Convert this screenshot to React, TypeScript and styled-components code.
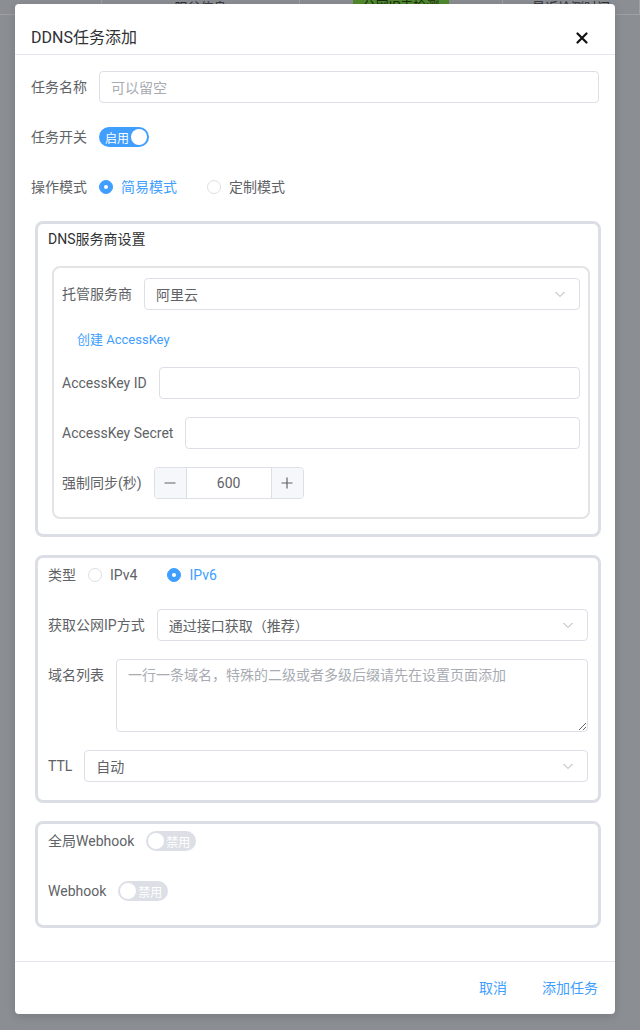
import React from "react";
import styled, { createGlobalStyle } from "styled-components";

const GlobalStyle = createGlobalStyle`
	html, body {
		margin: 0;
		padding: 0;
	}
	body {
		font-family: Roboto, "Noto Sans CJK SC", sans-serif;
		font-size: 14px;
		color: #606266;
	}
	* {
		box-sizing: border-box;
	}
`;

const Backdrop = styled.div`
	position: relative;
	width: 640px;
	height: 1030px;
	overflow: hidden;
	background: #8b8e93;
`;

const TableStrip = styled.div`
	display: flex;
	height: 15px;
	border-bottom: 1px solid #9da0a5;
	overflow: hidden;
`;

const StripCell = styled.div<{ $width: number }>`
	width: ${(p) => p.$width}px;
	flex-shrink: 0;
	border-right: 1px solid #9da0a5;
	display: flex;
	justify-content: center;
	align-items: flex-end;
	color: #2e2f31;
	font-size: 13px;
	line-height: 20px;

	& > span {
		margin-bottom: -4px;
	}
`;

const StripBadge = styled.span`
	background: #4f8a2d;
	color: #1d2b14;
	padding: 0 10px;
	margin-bottom: -2px !important;
`;

const Dialog = styled.div`
	position: absolute;
	top: 4px;
	left: 15px;
	width: 600px;
	background: #fff;
	border-radius: 4px;
	box-shadow: 0 2px 10px rgba(0, 0, 0, .15);
	display: flex;
	flex-direction: column;
`;

const Header = styled.div`
	display: flex;
	justify-content: space-between;
	align-items: center;
	padding: 24px 27px 6px 16px;
	border-bottom: 1px solid #e4e7ed;
`;

const Title = styled.div`
	font-size: 16px;
	line-height: 20px;
	color: #303133;
`;

const CloseButton = styled.div`
	display: flex;
	width: 12px;
	height: 12px;
`;

const Body = styled.div`
	padding: 16px 16px 33px;
	display: flex;
	flex-direction: column;
`;

const FormItem = styled.div<{ $top?: boolean; $gap?: number; $height?: number }>`
	display: flex;
	align-items: ${(p) => (p.$top ? "flex-start" : "center")};
	min-height: ${(p) => p.$height ?? 32}px;
	margin-bottom: ${(p) => p.$gap ?? 18}px;
`;

const Label = styled.label<{ $top?: boolean }>`
	flex-shrink: 0;
	margin-right: 12px;
	line-height: ${(p) => (p.$top ? "32px" : "20px")};
	color: #606266;
	white-space: nowrap;
`;

const TextInput = styled.div<{ $placeholder?: boolean }>`
	flex: 1;
	height: 32px;
	border: 1px solid #dcdfe6;
	border-radius: 4px;
	padding: 0 11px;
	display: flex;
	align-items: center;
	color: ${(p) => (p.$placeholder ? "#a8abb2" : "#606266")};
`;

const SelectBox = styled(TextInput)`
	justify-content: space-between;
	padding-right: 13px;
`;

const TextArea = styled.textarea`
	flex: 1;
	height: 73px;
	border: 1px solid #dcdfe6;
	border-radius: 4px;
	padding: 5px 11px;
	font: inherit;
	line-height: 20px;
	color: #606266;
	resize: vertical;

	&::placeholder {
		color: #a8abb2;
	}
`;

const SwitchTrack = styled.div<{ $on?: boolean }>`
	position: relative;
	width: 50px;
	height: 20px;
	border-radius: 10px;
	background: ${(p) => (p.$on ? "#409eff" : "#dcdfe6")};
	display: flex;
	align-items: center;
	justify-content: ${(p) => (p.$on ? "flex-start" : "flex-end")};
	padding: 0 ${(p) => (p.$on ? "0 0 6px" : "6px 0 0")};
	color: #fff;
	font-size: 12px;
`;

const SwitchKnob = styled.span<{ $on?: boolean }>`
	position: absolute;
	top: 2px;
	${(p) => (p.$on ? "right: 2px;" : "left: 2px;")}
	width: 16px;
	height: 16px;
	border-radius: 50%;
	background: #fff;
`;

const RadioGroup = styled.div`
	display: flex;
	align-items: center;
	gap: 30px;
`;

const Radio = styled.div<{ $checked?: boolean }>`
	display: flex;
	align-items: center;
	gap: 8px;
	color: ${(p) => (p.$checked ? "#409eff" : "#606266")};
	line-height: 20px;
`;

const RadioDot = styled.span<{ $checked?: boolean }>`
	width: 14px;
	height: 14px;
	border-radius: 50%;
	border: 1px solid ${(p) => (p.$checked ? "#409eff" : "#dcdfe6")};
	background: ${(p) => (p.$checked ? "#409eff" : "#fff")};
	display: flex;
	align-items: center;
	justify-content: center;

	&::after {
		content: "";
		width: 4px;
		height: 4px;
		border-radius: 50%;
		background: ${(p) => (p.$checked ? "#fff" : "transparent")};
	}
`;

const Group = styled.div`
	border: 3px solid #dcdee6;
	border-radius: 8px;
	margin: 0 -2px 18px 4px;
	padding: 1px 10px 0;

	&:last-child {
		margin-bottom: 0;
	}
`;

const Legend = styled.div`
	padding-top: 4px;
	margin-bottom: 17px;
	line-height: 20px;
	color: #303133;
`;

const SubGroup = styled.div`
	border: 2px solid #e4e4e6;
	border-radius: 8px;
	margin: 0 -2px 15px 4px;
	padding: 10px 8px 0;
`;

const LinkButton = styled.div`
	padding-left: 15px;
	color: #409eff;
	line-height: 24px;
	font-size: 13px;
`;

const NumberInput = styled.div`
	display: flex;
	width: 150px;
	height: 32px;
	border: 1px solid #dcdfe6;
	border-radius: 4px;
	overflow: hidden;
`;

const NumberButton = styled.div<{ $side: "left" | "right" }>`
	width: 32px;
	flex-shrink: 0;
	background: #f5f7fa;
	display: flex;
	align-items: center;
	justify-content: center;
	border-${(p) => (p.$side === "left" ? "right" : "left")}: 1px solid #dcdfe6;
`;

const NumberValue = styled.div`
	flex: 1;
	display: flex;
	align-items: center;
	justify-content: center;
	color: #606266;
`;

const Footer = styled.div`
	display: flex;
	justify-content: flex-end;
	gap: 35px;
	padding: 16px 17px 16px;
	border-top: 1px solid #e4e7ed;
`;

const TextButton = styled.div`
	color: #409eff;
	line-height: 20px;
`;

const Chevron = () => (
	<svg width="12" height="12" viewBox="0 0 12 12" fill="none">
		<path d="M1.5 4l4.5 4.5L10.5 4" stroke="#a8abb2" strokeWidth="1" />
	</svg>
);

const Select = ({ value }: { value: string }) => (
	<SelectBox>
		<span>{value}</span>
		<Chevron />
	</SelectBox>
);

const Switch = ({ on, text }: { on?: boolean; text: string }) => (
	<SwitchTrack $on={on}>
		<span>{text}</span>
		<SwitchKnob $on={on} />
	</SwitchTrack>
);

const App = () => {
	return (
		<Backdrop>
			<GlobalStyle />
			<TableStrip>
				<StripCell $width={102} />
				<StripCell $width={198}>
					<span>阳谷信息</span>
				</StripCell>
				<StripCell $width={203}>
					<StripBadge>公网IP未检测</StripBadge>
				</StripCell>
				<StripCell $width={137}>
					<span>最近检测时间</span>
				</StripCell>
			</TableStrip>

			<Dialog>
				<Header>
					<Title>DDNS任务添加</Title>
					<CloseButton>
						<svg width="12" height="12" viewBox="0 0 12 12">
							<path d="M1.5 1.5l9 9M10.5 1.5l-9 9" stroke="#111" strokeWidth="2.2" strokeLinecap="round" />
						</svg>
					</CloseButton>
				</Header>

				<Body>
					<FormItem>
						<Label>任务名称</Label>
						<TextInput $placeholder>可以留空</TextInput>
					</FormItem>
					<FormItem>
						<Label>任务开关</Label>
						<Switch on text="启用" />
					</FormItem>
					<FormItem>
						<Label>操作模式</Label>
						<RadioGroup>
							<Radio $checked>
								<RadioDot $checked />
								简易模式
							</Radio>
							<Radio>
								<RadioDot />
								定制模式
							</Radio>
						</RadioGroup>
					</FormItem>

					<Group>
						<Legend>DNS服务商设置</Legend>
						<SubGroup>
							<FormItem>
								<Label>托管服务商</Label>
								<Select value="阿里云" />
							</FormItem>
							<FormItem $gap={15} $height={24}>
								<LinkButton>创建 AccessKey</LinkButton>
							</FormItem>
							<FormItem>
								<Label>AccessKey ID</Label>
								<TextInput />
							</FormItem>
							<FormItem>
								<Label>AccessKey Secret</Label>
								<TextInput />
							</FormItem>
							<FormItem>
								<Label>强制同步(秒)</Label>
								<NumberInput>
									<NumberButton $side="left">
										<svg width="14" height="14" viewBox="0 0 14 14">
											<path d="M1.5 7h11" stroke="#606266" strokeWidth="1.2" />
										</svg>
									</NumberButton>
									<NumberValue>600</NumberValue>
									<NumberButton $side="right">
										<svg width="14" height="14" viewBox="0 0 14 14">
											<path d="M1.5 7h11M7 1.5v11" stroke="#606266" strokeWidth="1.2" />
										</svg>
									</NumberButton>
								</NumberInput>
							</FormItem>
						</SubGroup>
					</Group>

					<Group>
						<FormItem>
							<Label>类型</Label>
							<RadioGroup>
								<Radio>
									<RadioDot />
									IPv4
								</Radio>
								<Radio $checked>
									<RadioDot $checked />
									IPv6
								</Radio>
							</RadioGroup>
						</FormItem>
						<FormItem>
							<Label>获取公网IP方式</Label>
							<Select value="通过接口获取（推荐）" />
						</FormItem>
						<FormItem $top>
							<Label $top>域名列表</Label>
							<TextArea placeholder="一行一条域名，特殊的二级或者多级后缀请先在设置页面添加" />
						</FormItem>
						<FormItem>
							<Label>TTL</Label>
							<Select value="自动" />
						</FormItem>
					</Group>

					<Group>
						<FormItem>
							<Label>全局Webhook</Label>
							<Switch text="禁用" />
						</FormItem>
						<FormItem>
							<Label>Webhook</Label>
							<Switch text="禁用" />
						</FormItem>
					</Group>
				</Body>

				<Footer>
					<TextButton>取消</TextButton>
					<TextButton>添加任务</TextButton>
				</Footer>
			</Dialog>
		</Backdrop>
	);
};

export default App;
